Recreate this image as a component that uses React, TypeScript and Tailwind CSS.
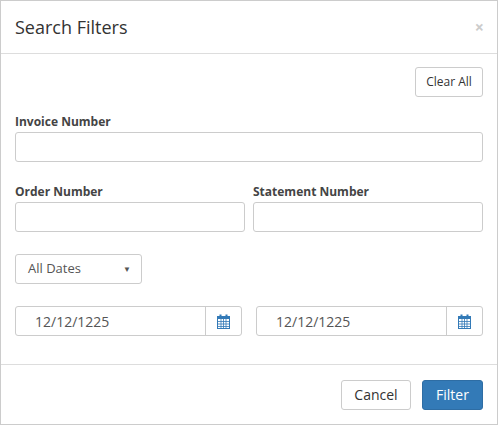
import React from "react";

const Cal = () => (
  <svg width="13" height="15" viewBox="0 0 13 15">
    <rect x="0.5" y="2.5" width="12" height="12" fill="none" stroke="#337ab7" />
    <rect x="0" y="2" width="13" height="3" fill="#337ab7" />
    <rect x="2.5" y="0.5" width="2" height="3" fill="#337ab7" />
    <rect x="8.5" y="0.5" width="2" height="3" fill="#337ab7" />
    {[4, 6.5, 9].map((x) => (
      <line key={x} x1={x} y1="5" x2={x} y2="14" stroke="#337ab7" strokeWidth="0.8" />
    ))}
    {[7.5, 10, 12.5].map((y) => (
      <line key={y} x1="0.5" y1={y} x2="12.5" y2={y} stroke="#337ab7" strokeWidth="0.8" />
    ))}
  </svg>
);

const input = "h-[30px] border border-[#ccc] rounded-[3px] bg-white";

export default function App() {
  return (
    <div className="w-[498px] h-[425px] bg-white border border-[#ccc] flex flex-col text-[#333]" style={{ fontFamily: '"Open Sans", sans-serif' }}>
      <div className="h-[53px] border-b border-[#ddd] flex items-center justify-between pl-[14px] pr-[13px] shrink-0">
        <span className="text-[18px]">Search Filters</span>
        <span className="text-[16px] font-bold text-[#ccc] leading-none">×</span>
      </div>
      <div className="flex-1 px-[14px] pt-[13px]">
        <div className="flex justify-end">
          <button className="h-[30px] w-[68px] border border-[#ccc] rounded-[3px] text-[12px]">Clear All</button>
        </div>
        <div className="mt-[17px] text-[12px] font-bold text-[#444] leading-[16px]">Invoice Number</div>
        <div className={`${input} mt-[2px]`} />
        <div className="mt-[22px] flex gap-[8px]">
          <div className="flex-1">
            <div className="text-[12px] font-bold text-[#444] leading-[16px]">Order Number</div>
            <div className={`${input} mt-[2px]`} />
          </div>
          <div className="flex-1">
            <div className="text-[12px] font-bold text-[#444] leading-[16px]">Statement Number</div>
            <div className={`${input} mt-[2px]`} />
          </div>
        </div>
        <div className={`${input} mt-[22px] w-[127px] flex items-center justify-between pl-[12px] pr-[10px] text-[13px] text-[#555]`}>
          <span>All Dates</span>
          <span className="text-[8px]">▼</span>
        </div>
        <div className="mt-[22px] flex justify-between">
          {[0, 1].map((i) => (
            <div key={i} className={`${input} w-[227px] flex`}>
              <div className="flex-1 flex items-center pl-[19px] text-[14px] text-[#555]">12/12/1225</div>
              <div className="w-[36px] border-l border-[#ccc] flex items-center justify-center"><Cal /></div>
            </div>
          ))}
        </div>
      </div>
      <div className="h-[60px] border-t border-[#ddd] flex items-center justify-end gap-[11px] px-[14px] shrink-0">
        <button className="h-[30px] w-[70px] border border-[#ccc] rounded-[3px] text-[14px]">Cancel</button>
        <button className="h-[30px] w-[61px] bg-[#337ab7] border border-[#2e6da4] rounded-[3px] text-[14px] text-white">Filter</button>
      </div>
    </div>
  );
}
